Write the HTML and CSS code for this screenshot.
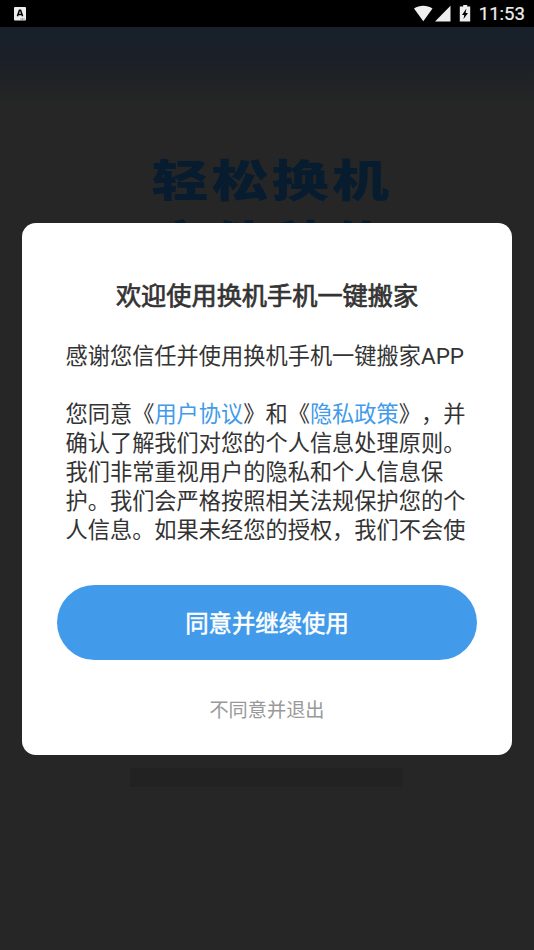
FILE: index.html
```html
<!DOCTYPE html>
<html lang="zh-CN">
<head>
<meta charset="utf-8">
<title>换机手机一键搬家</title>
<link rel="stylesheet" href="styles.css">
</head>
<body>
<div class="screen">
  <header class="status">
    <svg class="app-icon" width="12" height="14" viewBox="0 0 12 14"><rect width="12" height="13.5" rx="1" fill="#eee"/><path d="M3.4 9.2 5.4 3.2h1.2l2 6M4.2 7.5h3.6" fill="none" stroke="#000" stroke-width="1.5"/><path d="M6.5 12h4" stroke="#555" stroke-width="1" stroke-dasharray="1 .5"/></svg>
    <div class="status-right">
      <svg width="65" height="18" viewBox="0 0 65 18" class="signals"><path d="M0 3.6C5.5-.2 13-.2 18.5 3.6L9.3 16.2Z" fill="#eee"/><path d="M36.5.8V16.6H21Z" fill="#eee"/><path d="M49.2 0h4v1.6h3V16.6H45.8V1.6h3.4Z" fill="#eee"/><path d="M52.4 3.6 48 9.9h2.3l-.8 4.2 4.5-6.2h-2.4Z" fill="#000"/></svg>
      <span class="clock">11:53</span>
    </div>
  </header>
  <main class="page">
    <h1 class="hero">轻松换机<br>文件秒传</h1>
    <div class="placeholder"></div>
  </main>
  <section class="dialog">
    <h2 class="title">欢迎使用换机手机一键搬家</h2>
    <div class="body">
      <p>感谢您信任并使用换机手机一键搬家<span class="latin">APP</span></p>
      <p class="terms">您同意《<a>用户协议</a>》和《<a>隐私政策</a>》，并<br>确认了解我们对您的个人信息处理原则。<br>我们非常重视用户的隐私和个人信息保<br>护。我们会严格按照相关法规保护您的个<br>人信息。如果未经您的授权，我们不会使</p>
    </div>
    <button class="accept">同意并继续使用</button>
    <button class="decline">不同意并退出</button>
  </section>
</div>
</body>
</html>
```
FILE: styles.css
```css
* { box-sizing: border-box; margin: 0; padding: 0; }
body {
  font-family: "Noto Sans CJK SC", sans-serif;
  background: #262626;
  text-spacing-trim: space-all;
}
.screen {
  position: relative;
  width: 534px;
  height: 950px;
  overflow: hidden;
  display: flex;
  flex-direction: column;
}
.status {
  height: 27px;
  background: #000;
  display: flex;
  justify-content: space-between;
  align-items: flex-start;
  padding: 0 9px 0 14px;
}
.app-icon { margin-top: 6.5px; }
.status-right { display: flex; }
.signals { margin-top: 4.5px; flex: none; }
.clock {
  font: 400 18.6px/28px Roboto, sans-serif;
  -webkit-text-stroke: .2px #eee;
  color: #eee;
}
.page {
  flex: 1;
  display: flex;
  flex-direction: column;
  align-items: center;
  background: linear-gradient(#17202a 0, #1b1f28 28px, #1f2225 52px, #262626 80px);
}
.hero {
  height: 120px;
  margin-top: 121px;
  font-size: 44px;
  font-weight: 900;
  line-height: 61px;
  letter-spacing: 2.4px;
  color: #071c2f;
  white-space: nowrap;
  transform: scaleX(1.295);
  margin-left: 9px;
}
.placeholder {
  margin-top: 500px;
  width: 273px;
  height: 19px;
  margin-right: 1px;
  background: #222;
}
.dialog {
  position: absolute;
  left: 22px;
  top: 223px;
  width: 490px;
  height: 532px;
  border-radius: 14px;
  background: #fff;
  display: flex;
  flex-direction: column;
  align-items: center;
  padding-top: 52px;
  color: #333;
}
.title {
  font-size: 25.2px;
  line-height: 38px;
  font-weight: 400;
  -webkit-text-stroke: .7px #333;
  white-space: nowrap;
}
.body {
  width: 403px;
  margin-top: 27px;
  font-size: 22.22px;
  line-height: 29px;
  white-space: nowrap;
}
.latin { font-family: Roboto, sans-serif; font-size: 22.5px; line-height: 1; }
.terms { margin-top: 29px; }
.terms a { color: #429bea; }
.accept {
  margin-top: 42px;
  width: 420px;
  height: 75px;
  border: 0;
  border-radius: 38px;
  background: #429bea;
  color: #fff;
  font: 400 23.4px/75px "Noto Sans CJK SC", sans-serif;
  -webkit-text-stroke: .5px #fff;
}
.decline {
  margin-top: 35px;
  border: 0;
  background: none;
  color: #999;
  font: 400 19.2px/29px "Noto Sans CJK SC", sans-serif;
}
```
